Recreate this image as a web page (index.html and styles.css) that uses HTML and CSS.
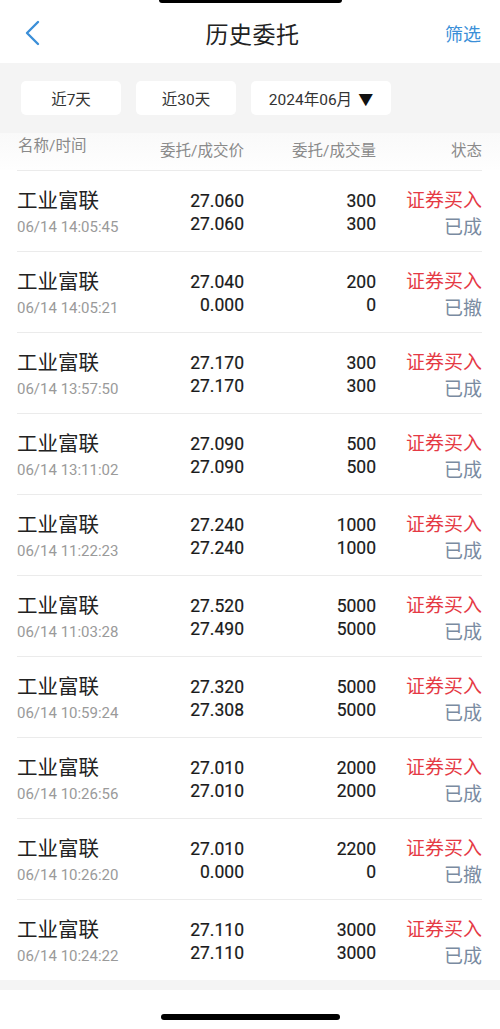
FILE: index.html
```html
<html>
<head>
<meta charset="utf-8">
<link rel="stylesheet" href="styles.css">
</head>
<body>
<div class="notch"></div>
<div class="header">
  <svg class="back" width="16" height="26" viewBox="0 0 16 26"><path d="M14 2 L3 13 L14 24" fill="none" stroke="#3b8fd8" stroke-width="2.4" stroke-linecap="round" stroke-linejoin="round"/></svg>
  <div class="title">历史委托</div>
  <div class="filter">筛选</div>
</div>

<div class="tools">
  <div class="btns">
    <div class="btn b1">近7天</div>
    <div class="btn b1">近30天</div>
    <div class="btn b2">2024年06月 <span class="tri">▼</span></div>
  </div>
  <div class="cols">
    <div class="c1">名称/时间</div>
    <div class="c2">委托/成交价</div>
    <div class="c2">委托/成交量</div>
    <div class="c2">状态</div>
  </div>
</div>

<div class="list">
  <div class="row">
    <div><span class="name">工业富联</span><span class="time">06/14 14:05:45</span></div>
    <div class="num"><span>27.060</span><span>27.060</span></div>
    <div class="num"><span>300</span><span>300</span></div>
    <div class="st"><span class="buy">证券买入</span><span class="done">已成</span></div>
  </div>
  <div class="row">
    <div><span class="name">工业富联</span><span class="time">06/14 14:05:21</span></div>
    <div class="num"><span>27.040</span><span>0.000</span></div>
    <div class="num"><span>200</span><span>0</span></div>
    <div class="st"><span class="buy">证券买入</span><span class="done">已撤</span></div>
  </div>
  <div class="row">
    <div><span class="name">工业富联</span><span class="time">06/14 13:57:50</span></div>
    <div class="num"><span>27.170</span><span>27.170</span></div>
    <div class="num"><span>300</span><span>300</span></div>
    <div class="st"><span class="buy">证券买入</span><span class="done">已成</span></div>
  </div>
  <div class="row">
    <div><span class="name">工业富联</span><span class="time">06/14 13:11:02</span></div>
    <div class="num"><span>27.090</span><span>27.090</span></div>
    <div class="num"><span>500</span><span>500</span></div>
    <div class="st"><span class="buy">证券买入</span><span class="done">已成</span></div>
  </div>
  <div class="row">
    <div><span class="name">工业富联</span><span class="time">06/14 11:22:23</span></div>
    <div class="num"><span>27.240</span><span>27.240</span></div>
    <div class="num"><span>1000</span><span>1000</span></div>
    <div class="st"><span class="buy">证券买入</span><span class="done">已成</span></div>
  </div>
  <div class="row">
    <div><span class="name">工业富联</span><span class="time">06/14 11:03:28</span></div>
    <div class="num"><span>27.520</span><span>27.490</span></div>
    <div class="num"><span>5000</span><span>5000</span></div>
    <div class="st"><span class="buy">证券买入</span><span class="done">已成</span></div>
  </div>
  <div class="row">
    <div><span class="name">工业富联</span><span class="time">06/14 10:59:24</span></div>
    <div class="num"><span>27.320</span><span>27.308</span></div>
    <div class="num"><span>5000</span><span>5000</span></div>
    <div class="st"><span class="buy">证券买入</span><span class="done">已成</span></div>
  </div>
  <div class="row">
    <div><span class="name">工业富联</span><span class="time">06/14 10:26:56</span></div>
    <div class="num"><span>27.010</span><span>27.010</span></div>
    <div class="num"><span>2000</span><span>2000</span></div>
    <div class="st"><span class="buy">证券买入</span><span class="done">已成</span></div>
  </div>
  <div class="row">
    <div><span class="name">工业富联</span><span class="time">06/14 10:26:20</span></div>
    <div class="num"><span>27.010</span><span>0.000</span></div>
    <div class="num"><span>2200</span><span>0</span></div>
    <div class="st"><span class="buy">证券买入</span><span class="done">已撤</span></div>
  </div>
  <div class="row">
    <div><span class="name">工业富联</span><span class="time">06/14 10:24:22</span></div>
    <div class="num"><span>27.110</span><span>27.110</span></div>
    <div class="num"><span>3000</span><span>3000</span></div>
    <div class="st"><span class="buy">证券买入</span><span class="done">已成</span></div>
  </div>
</div>

<div class="band"></div>
<div class="footer"><div class="home"></div></div>
</body>
</html>
```

FILE: styles.css
```css
/* trade history page */
body {margin: 0; background-color: #ffffff; color: #222222; font-family: Roboto, "Noto Sans CJK SC", sans-serif; width: 500px; overflow: hidden;}
span {display: block;}

.notch {width: 183px; height: 3px; margin: 0 auto; background: #000000; border-radius: 0 0 3px 3px;}
.header {height: 60px; display: grid; grid-template-columns: 1fr auto 1fr; align-items: center; padding: 0 19px 0 24px;}
.back {display: block;}
.title {font-size: 23px; color: #222222; letter-spacing: 0.5px;}
.filter {justify-self: end; font-size: 18px; color: #3b8fd8;}

.tools {height: 107px; background: linear-gradient(#f4f4f4 0, #f4f4f4 65%, #f9f9f9 65%, #fefefe 100%);}
.btns {display: flex; gap: 15px; padding: 18px 0 0 21px;}
.btn {height: 34px; background: #ffffff; border-radius: 5px; display: flex; align-items: center; justify-content: center; font-size: 15.5px; color: #333333;}
.b1 {width: 100px;}
.b2 {width: 140px;}
.tri {display: inline; font-size: 15px; margin-left: 6px; color: #111111;}
.cols {display: grid; grid-template-columns: 140px 86px 132px 1fr; padding: 0 18px; margin-top: 20px; font-size: 15.5px; color: #8a8a8a;}
.c1 {line-height: 22px;}
.c2 {text-align: right; line-height: 22px; padding-top: 5px;}

.list {padding: 0 18px 0 17px;}
.row {height: 81px; box-sizing: border-box; border-top: 1px solid #ebebeb; display: grid; grid-template-columns: 141px 86px 132px 1fr; padding-top: 18px;}
.name {font-size: 20.5px; line-height: 24px; color: #222222;}
.time {font-size: 15px; line-height: 20px; margin-top: 4px; color: #9a9a9a;}
.num {text-align: right; font-size: 17.5px; color: #1a1a1a; -webkit-text-stroke: 0.2px #1a1a1a; padding-top: 1px;}
.num span {line-height: 23px;}
.st {text-align: right; font-size: 19px;}
.buy {line-height: 24px; color: #e53a45;}
.done {line-height: 24px; margin-top: 3px; color: #7a8ba1;}

.band {height: 10px; background: #f4f4f4;}
.footer {height: 39px; padding-top: 24px; box-sizing: border-box;}
.home {width: 179px; height: 6px; margin: 0 auto; background: #000000; border-radius: 3px;}
```
